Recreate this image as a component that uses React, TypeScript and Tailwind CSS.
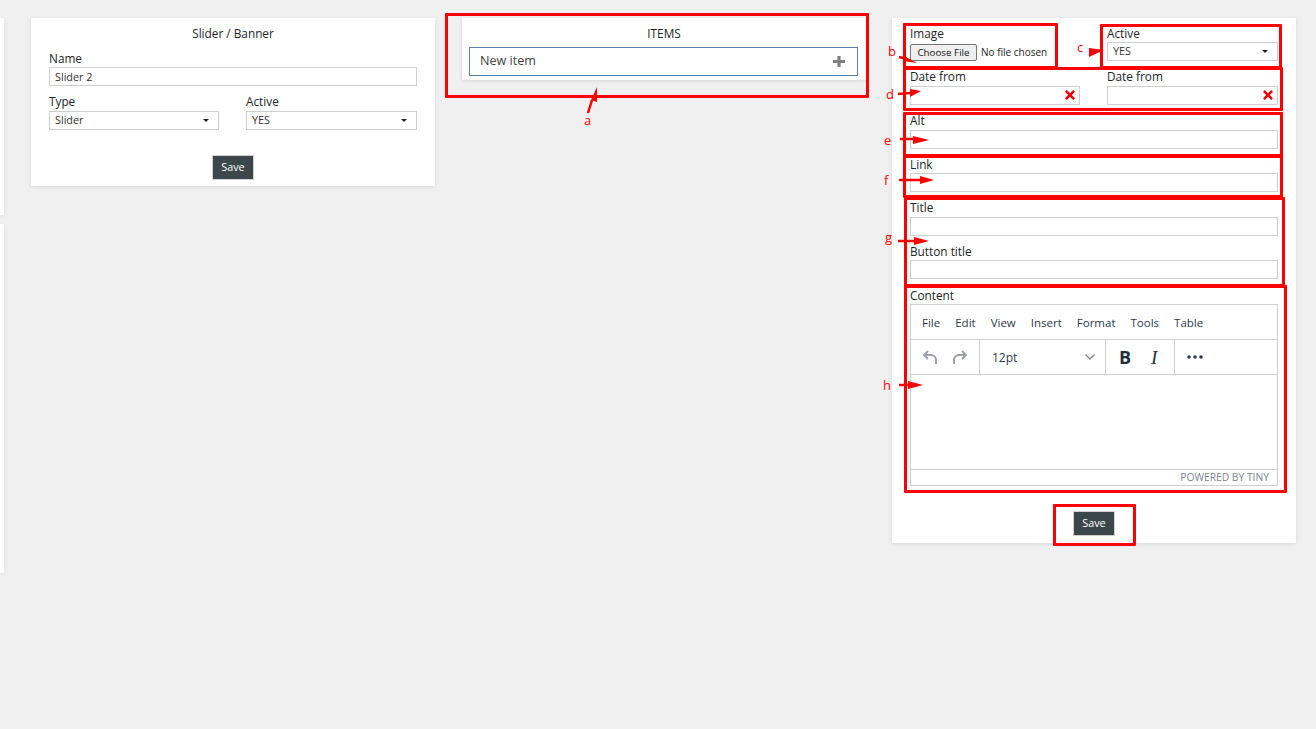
import React from "react";

const Caret = () => (
  <svg width="6" height="3" viewBox="0 0 6 3" className="shrink-0">
    <path d="M0 0h6L3 3z" fill="#222" />
  </svg>
);

const Label = ({ children, className = "", up = false }: { children: React.ReactNode; className?: string; up?: boolean }) => (
  <div className={`h-[16px] text-[11.8px] ${up ? "leading-[12px]" : "leading-[14px]"} text-[#212529] ${className}`}>{children}</div>
);

const Input = ({ value = "", className = "" }: { value?: string; className?: string }) => (
  <input
    readOnly
    value={value}
    className={`block h-[19px] w-full border border-[#cfcfcf] bg-white px-[5px] text-[10.8px] leading-[15px] text-[#333] outline-none ${className}`}
  />
);

const Select = ({ value, className = "" }: { value: string; className?: string }) => (
  <div className={`flex h-[19px] w-full items-center justify-between border border-[#cfcfcf] bg-white pl-[5px] pr-[9px] text-[10.8px] text-[#333] ${className}`}>
    <span>{value}</span>
    <Caret />
  </div>
);

const SaveButton = () => (
  <button className="h-[25px] w-[42px] border border-[#cfcfcf] bg-[#3b474b] text-[10.8px] text-white">Save</button>
);

const ClearIcon = () => (
  <svg width="10" height="10" viewBox="0 0 10 10" className="absolute right-[4px] top-[3px]">
    <path d="M1.8 0 5 3.2 8.2 0 10 1.8 6.8 5 10 8.2 8.2 10 5 6.8 1.8 10 0 8.2 3.2 5 0 1.8z" fill="#f00000" />
  </svg>
);

const DateField = () => (
  <div className="relative h-[19px] w-full border border-[#cfcfcf] bg-white">
    <ClearIcon />
  </div>
);

const Undo = () => (
  <svg width="16" height="14" viewBox="0 0 16 14" fill="none" stroke="#9aa1a9" strokeWidth="2">
    <path d="M6 1 2 5l4 4" />
    <path d="M2.5 5H9a5 5 0 0 1 5 5v4" />
  </svg>
);

const Redo = () => (
  <svg width="16" height="14" viewBox="0 0 16 14" fill="none" stroke="#9aa1a9" strokeWidth="2">
    <path d="m10 1 4 4-4 4" />
    <path d="M13.5 5H7a5 5 0 0 0-5 5v4" />
  </svg>
);

const Box = ({ c }: { c: string }) => <div className={`absolute rounded-[1px] border-[3px] border-[#ff0000] ${c}`} />;
const Letter = ({ t, c }: { t: string; c: string }) => (
  <span className={`absolute text-[13px] leading-[16px] text-[#ff0000] ${c}`}>{t}</span>
);

export default function App() {
  return (
    <div
      className="relative flex h-[729px] w-full items-start overflow-hidden bg-[#f0f0f0] pt-[18px]"
      style={{ fontFamily: '"Open Sans", sans-serif' }}
    >
      <div className="flex w-[4px] shrink-0 flex-col gap-[9px]">
        <div className="h-[197px] bg-white shadow-[0_1px_4px_rgba(0,0,0,0.08)]" />
        <div className="h-[349px] bg-white shadow-[0_1px_4px_rgba(0,0,0,0.08)]" />
      </div>

      <section className="ml-[27px] h-[168px] w-[404px] shrink-0 bg-white px-[18px] pt-[8px] shadow-[0_1px_4px_rgba(0,0,0,0.1)]">
        <h2 className="h-[16px] text-center text-[11.8px] leading-[14px] font-normal text-[#212529]">Slider / Banner</h2>
        <Label className="mt-[9px]">Name</Label>
        <Input value="Slider 2" />
        <div className="mt-[9px] flex gap-[27px]">
          <div className="w-[170px]">
            <Label up>Type</Label>
            <Select value="Slider" />
          </div>
          <div className="w-[171px]">
            <Label up>Active</Label>
            <Select value="YES" />
          </div>
        </div>
        <div className="mt-[25px] flex justify-center">
          <SaveButton />
        </div>
      </section>

      <section className="ml-[27px] h-[62px] w-[404px] shrink-0 bg-white px-[7px] pt-[8px] shadow-[0_1px_4px_rgba(0,0,0,0.1)]">
        <h2 className="h-[16px] text-center text-[11.8px] leading-[14px] font-normal text-[#212529]">ITEMS</h2>
        <div className="mt-[5px] flex h-[29px] w-[389px] items-center justify-between border border-[#5c7fae] pb-[1px] pl-[10px] pr-[12px] text-[12.6px] text-[#444]">
          <span>New item</span>
          <svg width="12" height="11" viewBox="0 0 12 11">
            <path d="M4.4 0h3.2v3.9H12v3.2H7.6V11H4.4V7.1H0V3.9h4.4z" fill="#808080" />
          </svg>
        </div>
      </section>

      <section className="ml-[26px] h-[525px] w-[404px] shrink-0 bg-white px-[18px] pt-[8px] shadow-[0_1px_4px_rgba(0,0,0,0.1)]">
        <div className="flex gap-[27px]">
          <div className="w-[170px]">
            <Label>Image</Label>
            <input
              type="file"
              className="mt-[2px] block h-[17px] w-full text-[10px] leading-[16px] text-[#222] file:mr-[4px] file:h-[17px] file:w-[67px] file:rounded-[2px] file:border file:border-[#767676] file:bg-[#efefef] file:text-[9.8px] file:text-[#111]"
            />
          </div>
          <div className="w-[171px]">
            <Label>Active</Label>
            <Select value="YES" />
          </div>
        </div>
        <div className="mt-[9px] flex gap-[27px]">
          <div className="w-[170px]">
            <Label up>Date from</Label>
            <DateField />
          </div>
          <div className="w-[171px]">
            <Label up>Date from</Label>
            <DateField />
          </div>
        </div>
        <Label up className="mt-[9px]">Alt</Label>
        <Input />
        <Label className="mt-[8px]">Link</Label>
        <Input />
        <Label up className="mt-[9px]">Title</Label>
        <Input />
        <Label className="mt-[8px]">Button title</Label>
        <Input />
        <Label className="mt-[9px]">Content</Label>
        <div className="h-[182px] w-[368px] border border-[#cfcfcf]">
          <div className="flex h-[35px] items-center gap-[15px] border-b border-[#cfcfcf] pl-[11px] pt-[2px] text-[11.5px] text-[#2b3b4e]">
            <span>File</span>
            <span>Edit</span>
            <span>View</span>
            <span>Insert</span>
            <span>Format</span>
            <span>Tools</span>
            <span>Table</span>
          </div>
          <div className="flex h-[35px] border-b border-[#cfcfcf]">
            <div className="flex w-[69px] items-center justify-center gap-[14px] border-r border-[#cfcfcf]">
              <Undo />
              <Redo />
            </div>
            <div className="flex w-[126px] items-center justify-between border-r border-[#cfcfcf] pl-[12px] pr-[10px] text-[12px] text-[#2b3b4e]">
              <span className="pt-[2px]">12pt</span>
              <svg width="10" height="6" viewBox="0 0 10 6" fill="none" stroke="#7d8590" strokeWidth="1.3">
                <path d="m0.5 0.5 4.5 4.5 4.5-4.5" />
              </svg>
            </div>
            <div className="flex w-[69px] items-center gap-[20px] border-r border-[#cfcfcf] pl-[13px] text-[#222f3e]">
              <span className="text-[18px] leading-[18px] font-bold">B</span>
              <span className="text-[19px] leading-[19px] italic" style={{ fontFamily: '"Liberation Serif", serif' }}>I</span>
            </div>
            <div className="flex flex-1 items-center pl-[12px]">
              <svg width="16" height="4" viewBox="0 0 16 4" fill="#2b3b4e">
                <circle cx="2" cy="2" r="1.8" />
                <circle cx="8" cy="2" r="1.8" />
                <circle cx="14" cy="2" r="1.8" />
              </svg>
            </div>
          </div>
          <div className="h-[95px] border-b border-[#cfcfcf]" />
          <div className="flex h-[15px] items-center justify-end pr-[8px] text-[10.3px] text-[#7d8590]">POWERED BY TINY</div>
        </div>
        <div className="mt-[25px] flex justify-center">
          <SaveButton />
        </div>
      </section>

      <Box c="left-[445px] top-[13px] h-[85px] w-[424px]" />
      <Box c="left-[903px] top-[23px] h-[46px] w-[155px]" />
      <Box c="left-[1100px] top-[24px] h-[45px] w-[182px]" />
      <Box c="left-[903px] top-[67px] h-[44px] w-[380px]" />
      <Box c="left-[903px] top-[112px] h-[45px] w-[380px]" />
      <Box c="left-[903px] top-[155px] h-[43px] w-[380px]" />
      <Box c="left-[904px] top-[197px] h-[90px] w-[381px]" />
      <Box c="left-[904px] top-[285px] h-[208px] w-[383px]" />
      <Box c="left-[1053px] top-[504px] h-[42px] w-[83px]" />

      <svg className="absolute left-0 top-0" width="1316" height="729" fill="#ff0000" stroke="none">
        <path d="M588 113l4-13" stroke="#ff0000" strokeWidth="2.5" />
        <path d="M597 87l0 15-6-2z" />
        <path d="M899 57l8 2" stroke="#ff0000" strokeWidth="2.5" />
        <path d="M917 63 904 56l-1 5z" />
        <path d="M1089 48l15 2-15 7z" />
        <path d="M898 94l12-1" stroke="#ff0000" strokeWidth="2.5" />
        <path d="M921 91 910 89v8z" />
        <path d="M900 139h14" stroke="#ff0000" strokeWidth="2.5" />
        <path d="M929 140 913 136v8z" />
        <path d="M899 180h22" stroke="#ff0000" strokeWidth="2.5" />
        <path d="M934 180 920 176v8z" />
        <path d="M898 241h18" stroke="#ff0000" strokeWidth="2.5" />
        <path d="M929 241 914 237v8z" />
        <path d="M899 385h10" stroke="#ff0000" strokeWidth="2.5" />
        <path d="M923 385 908 381v8z" />
      </svg>

      <Letter t="a" c="left-[584px] top-[112px]" />
      <Letter t="b" c="left-[888px] top-[43px]" />
      <Letter t="c" c="left-[1077px] top-[39px]" />
      <Letter t="d" c="left-[886px] top-[86px]" />
      <Letter t="e" c="left-[884px] top-[132px]" />
      <Letter t="f" c="left-[884px] top-[172px]" />
      <Letter t="g" c="left-[885px] top-[229px]" />
      <Letter t="h" c="left-[883px] top-[377px]" />
    </div>
  );
}
